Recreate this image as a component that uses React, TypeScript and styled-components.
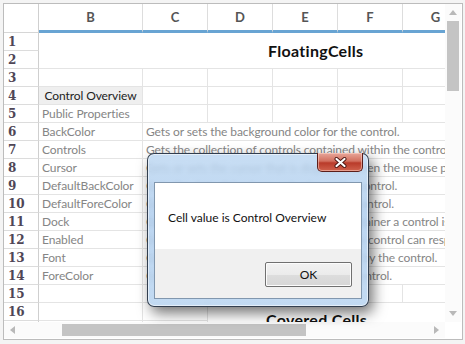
import React from "react";
import styled, { createGlobalStyle } from "styled-components";

const GlobalStyle = createGlobalStyle`
  html, body {
    margin: 0;
    padding: 0;
    background: #f4f4f4;
  }
  body {
    font-family: Lato, "Open Sans", sans-serif;
  }
`;

// column widths of the sheet (row header + B..G), each includes its 1px right line
const COLS = [35, 104, 65, 65, 65, 65, 65];

const Frame = styled.div`
  position: relative;
  margin: 3px 0 0 3px;
  width: 458px;
  height: 335px;
  border: 1px solid #bcbcbc;
  background: #fff;
  display: flex;
  flex-direction: column;
`;

const Main = styled.div`
  display: flex;
  height: 318px;
`;

const Viewport = styled.div`
  width: 441px;
  height: 318px;
  overflow: hidden;
`;

const Sheet = styled.div`
  display: grid;
  width: ${COLS.reduce((a, b) => a + b, 0)}px;
  grid-template-columns: ${COLS.map((c) => `${c}px`).join(" ")};
  grid-template-rows: 29px;
  grid-auto-rows: 18px;
`;

const HeadCorner = styled.div`
  border-right: 1px solid #cfcfcf;
  border-bottom: 1px solid #d6d6d6;
`;

const ColHead = styled.div<{ $last?: boolean }>`
  display: flex;
  align-items: center;
  justify-content: center;
  padding-bottom: 1px;
  border-right: ${(p) => (p.$last ? "none" : "1px solid #dddddd")};
  border-bottom: 3px solid #68a4d3;
  font-weight: 700;
  font-size: 13px;
  color: #555;
`;

const RowHead = styled.div`
  display: flex;
  align-items: center;
  padding-left: 4px;
  border-right: 1px solid #cfcfcf;
  border-bottom: 1px solid #dcdcdc;
  font-family: "DejaVu Serif", "Liberation Serif", serif;
  font-weight: 700;
  font-size: 12px;
  color: #4f4656;
`;

const Cell = styled.div<{
  $span?: number;
  $rows?: number;
  $tone?: "muted" | "selected";
}>`
  grid-column: span ${(p) => p.$span ?? 1};
  grid-row: span ${(p) => p.$rows ?? 1};
  display: flex;
  align-items: center;
  justify-content: ${(p) => (p.$tone === "selected" ? "center" : "flex-start")};
  padding-left: ${(p) => (p.$tone === "selected" ? 0 : 3)}px;
  overflow: hidden;
  white-space: nowrap;
  border-right: 1px solid #e4e4e4;
  border-bottom: 1px solid #e4e4e4;
  background: ${(p) => (p.$tone === "selected" ? "#efefef" : "#fff")};
  font-size: 12px;
  letter-spacing: -0.1px;
  line-height: 17px;
  color: ${(p) => (p.$tone === "selected" ? "#222" : "#858585")};
`;

const Heading = styled(Cell)<{ $indent: number; $top?: number }>`
  align-items: ${(p) => (p.$top !== undefined ? "flex-start" : "center")};
  padding-left: ${(p) => p.$indent}px;
  padding-top: ${(p) => p.$top ?? 0}px;
  border-right: none;
  font-weight: 700;
  font-size: 16px;
  letter-spacing: 0.3px;
  color: #111;
`;

const VScroll = styled.div`
  width: 16px;
  display: flex;
  flex-direction: column;
  align-items: center;
  background: #fbfbfb;
`;

const ArrowBox = styled.div`
  flex: 0 0 17px;
  width: 17px;
  height: 17px;
  display: flex;
  align-items: center;
  justify-content: center;
`;

const VThumb = styled.div`
  width: 12px;
  height: 70px;
  background: #c4c4c4;
`;

const Spacer = styled.div`
  flex: 1;
`;

const BottomRow = styled.div`
  display: flex;
  height: 16px;
`;

const HScroll = styled.div`
  width: 441px;
  display: flex;
  align-items: center;
  background: #fbfbfb;
`;

const HThumb = styled.div`
  width: 244px;
  height: 12px;
  margin-left: 41px;
  background: #c4c4c4;
`;

const CornerBox = styled.div`
  width: 16px;
  background: #fff;
`;

const Dialog = styled.div`
  position: absolute;
  left: 143px;
  top: 149px;
  width: 222px;
  height: 154px;
  box-sizing: border-box;
  padding: 28px 6px 7px 6px;
  border: 1px solid rgba(25, 35, 50, 0.85);
  border-radius: 7px;
  background: linear-gradient(
    180deg,
    rgba(186, 214, 242, 0.78) 0%,
    rgba(172, 204, 238, 0.8) 40%,
    rgba(184, 212, 240, 0.85) 100%
  );
  backdrop-filter: blur(2.5px);
  box-shadow: 4px 6px 14px rgba(0, 0, 0, 0.55), inset 0 0 0 1px rgba(255, 255, 255, 0.55);
  display: flex;
`;

const CloseButton = styled.div`
  position: absolute;
  top: -1px;
  right: 5px;
  width: 46px;
  height: 19px;
  box-sizing: border-box;
  border: 1px solid #5c1e1a;
  border-top: none;
  border-radius: 0 0 5px 5px;
  background: linear-gradient(180deg, #e8a79a 0%, #d2705f 45%, #b93b2a 55%, #d0624d 100%);
  box-shadow: inset 0 0 0 1px rgba(255, 220, 210, 0.5);
  display: flex;
  align-items: center;
  justify-content: center;
`;

const DialogBody = styled.div`
  flex: 1;
  display: flex;
  flex-direction: column;
  border: 1px solid #8197ae;
  background: #f0f0f0;
`;

const Message = styled.div`
  height: 66px;
  display: flex;
  align-items: center;
  padding: 3px 0 0 13px;
  box-sizing: border-box;
  background: #fff;
  font-size: 12px;
  color: #111;
`;

const Footer = styled.div`
  flex: 1;
  display: flex;
  justify-content: flex-end;
  align-items: flex-start;
  padding: 13px 9px 0 0;
`;

const OkButton = styled.div`
  width: 87px;
  height: 25px;
  box-sizing: border-box;
  border: 1px solid #707070;
  border-radius: 2px;
  background: linear-gradient(180deg, #f2f2f2 0%, #ebebeb 50%, #dddddd 51%, #d6d6d6 100%);
  box-shadow: inset 0 0 0 1px #fcfcfc;
  display: flex;
  align-items: center;
  justify-content: center;
  font-size: 12px;
  color: #111;
`;

const Tri = ({ dir }: { dir: "up" | "down" | "left" | "right" }) => {
  const pts = {
    up: "0,5 4,0 8,5",
    down: "0,0 8,0 4,5",
    left: "5,0 5,8 0,4",
    right: "0,0 5,4 0,8",
  }[dir];
  const vertical = dir === "up" || dir === "down";
  return (
    <svg width={vertical ? 8 : 5} height={vertical ? 5 : 8}>
      <polygon points={pts} fill="#b9b9b9" />
    </svg>
  );
};

const descriptions: [string, string][] = [
  ["BackColor", "Gets or sets the background color for the control."],
  ["Controls", "Gets the collection of controls contained within the control."],
  ["Cursor", "Gets or sets the cursor that is displayed when the mouse pointer is over the control."],
  ["DefaultBackColor", "Gets the default background color of the control."],
  ["DefaultForeColor", "Gets the default foreground color of the control."],
  ["Dock", "Gets or sets which edge of the parent container a control is docked to."],
  ["Enabled", "Gets or sets a value indicating whether the control can respond to user interaction."],
  ["Font", "Gets or sets the font of the text displayed by the control."],
  ["ForeColor", "Gets or sets the foreground color of the control."],
];

const letters = ["B", "C", "D", "E", "F", "G"];

const EmptyRow = ({ n }: { n: number }) => (
  <>
    <RowHead>{n}</RowHead>
    {letters.map((l) => (
      <Cell key={l} />
    ))}
  </>
);

export default function App() {
  return (
    <>
      <GlobalStyle />
      <Frame>
        <Main>
          <Viewport>
            <Sheet>
              <HeadCorner />
              {letters.map((l, i) => (
                <ColHead key={l} $last={i === letters.length - 1}>
                  {l}
                </ColHead>
              ))}

              <RowHead>1</RowHead>
              <Heading $span={6} $rows={2} $indent={229}>
                FloatingCells
              </Heading>
              <RowHead>2</RowHead>
              <EmptyRow n={3} />

              <RowHead>4</RowHead>
              <Cell $tone="selected">Control Overview</Cell>
              {letters.slice(1).map((l) => (
                <Cell key={l} />
              ))}

              <RowHead>5</RowHead>
              <Cell $tone="muted">Public Properties</Cell>
              {letters.slice(1).map((l) => (
                <Cell key={l} />
              ))}

              {descriptions.map(([name, text], i) => (
                <React.Fragment key={name}>
                  <RowHead>{6 + i}</RowHead>
                  <Cell $tone="muted">{name}</Cell>
                  <Cell $tone="muted" $span={5}>
                    {text}
                  </Cell>
                </React.Fragment>
              ))}

              <EmptyRow n={15} />

              <RowHead>16</RowHead>
              <Cell />
              <Cell />
              <Heading $span={4} $rows={2} $indent={58} $top={8}>
                Covered Cells
              </Heading>
              <RowHead>17</RowHead>
              <Cell />
              <Cell />
            </Sheet>
          </Viewport>
          <VScroll>
            <ArrowBox>
              <Tri dir="up" />
            </ArrowBox>
            <VThumb />
            <Spacer />
            <ArrowBox>
              <Tri dir="down" />
            </ArrowBox>
          </VScroll>
        </Main>
        <BottomRow>
          <HScroll>
            <ArrowBox>
              <Tri dir="left" />
            </ArrowBox>
            <HThumb />
            <Spacer />
            <ArrowBox>
              <Tri dir="right" />
            </ArrowBox>
          </HScroll>
          <CornerBox />
        </BottomRow>

        <Dialog>
          <CloseButton>
            <svg width="13" height="11" viewBox="0 0 13 11">
              <path d="M2.5 2 L10.5 9 M10.5 2 L2.5 9" stroke="#4a1410" strokeWidth="4" strokeLinecap="round" />
              <path d="M2.5 2 L10.5 9 M10.5 2 L2.5 9" stroke="#fff" strokeWidth="2.2" strokeLinecap="round" />
            </svg>
          </CloseButton>
          <DialogBody>
            <Message>Cell value is Control Overview</Message>
            <Footer>
              <OkButton>OK</OkButton>
            </Footer>
          </DialogBody>
        </Dialog>
      </Frame>
    </>
  );
}
